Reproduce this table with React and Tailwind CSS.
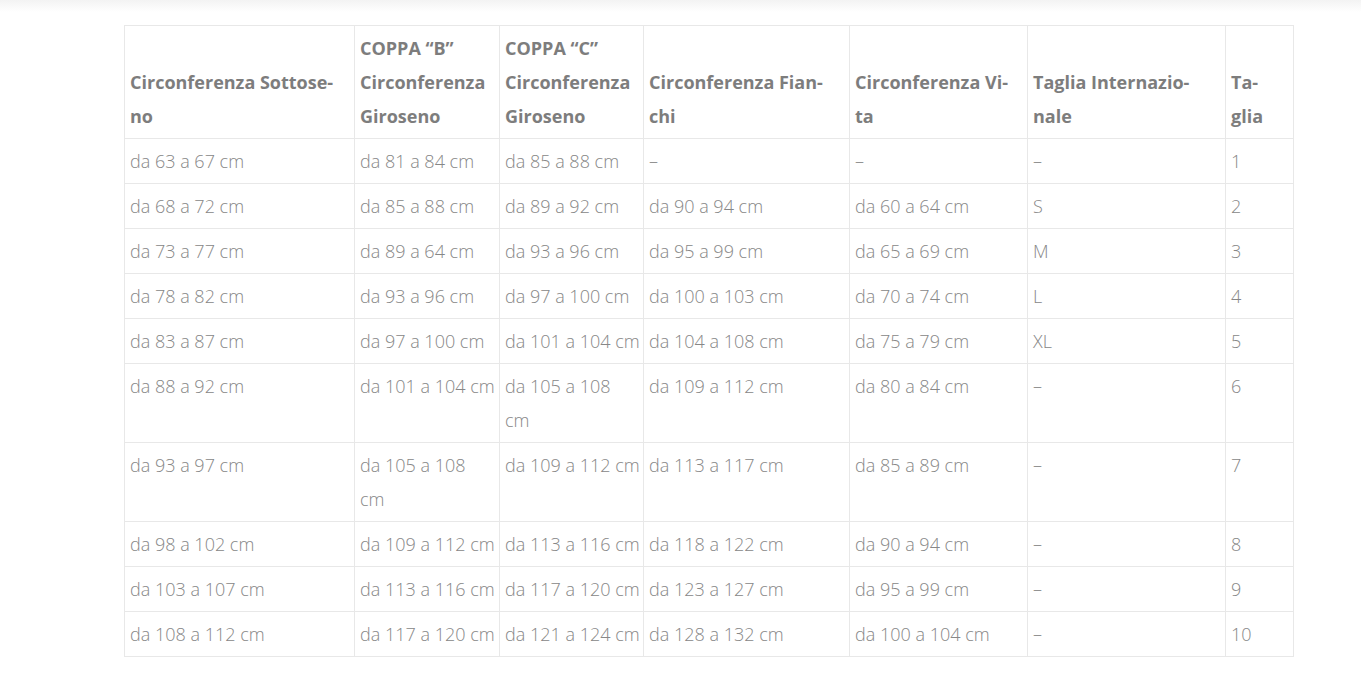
import React from 'react';

const headers = [
  ['Circonferenza Sottose-', 'no'],
  ['COPPA “B”', 'Circonferenza', 'Giroseno'],
  ['COPPA “C”', 'Circonferenza', 'Giroseno'],
  ['Circonferenza Fian-', 'chi'],
  ['Circonferenza Vi-', 'ta'],
  ['Taglia Internazio-', 'nale'],
  ['Ta-', 'glia'],
];

const colWidths = ['w-[230px]', 'w-[145px]', 'w-[144px]', 'w-[206px]', 'w-[178px]', 'w-[198px]', 'w-[68px]'];

// each cell: string or array of lines when it wraps
const rows = [
  ['da 63 a 67 cm', 'da 81 a 84 cm', 'da 85 a 88 cm', '–', '–', '–', '1'],
  ['da 68 a 72 cm', 'da 85 a 88 cm', 'da 89 a 92 cm', 'da 90 a 94 cm', 'da 60 a 64 cm', 'S', '2'],
  ['da 73 a 77 cm', 'da 89 a 64 cm', 'da 93 a 96 cm', 'da 95 a 99 cm', 'da 65 a 69 cm', 'M', '3'],
  ['da 78 a 82 cm', 'da 93 a 96 cm', 'da 97 a 100 cm', 'da 100 a 103 cm', 'da 70 a 74 cm', 'L', '4'],
  ['da 83 a 87 cm', 'da 97 a 100 cm', 'da 101 a 104 cm', 'da 104 a 108 cm', 'da 75 a 79 cm', 'XL', '5'],
  ['da 88 a 92 cm', 'da 101 a 104 cm', ['da 105 a 108', 'cm'], 'da 109 a 112 cm', 'da 80 a 84 cm', '–', '6'],
  ['da 93 a 97 cm', ['da 105 a 108', 'cm'], 'da 109 a 112 cm', 'da 113 a 117 cm', 'da 85 a 89 cm', '–', '7'],
  ['da 98 a 102 cm', 'da 109 a 112 cm', 'da 113 a 116 cm', 'da 118 a 122 cm', 'da 90 a 94 cm', '–', '8'],
  ['da 103 a 107 cm', 'da 113 a 116 cm', 'da 117 a 120 cm', 'da 123 a 127 cm', 'da 95 a 99 cm', '–', '9'],
  ['da 108 a 112 cm', 'da 117 a 120 cm', 'da 121 a 124 cm', 'da 128 a 132 cm', 'da 100 a 104 cm', '–', '10'],
];

const Lines = ({ value }) => {
  const lines = Array.isArray(value) ? value : [value];
  return lines.map((line, i) => (
    <React.Fragment key={i}>
      {i > 0 && <br />}
      {line}
    </React.Fragment>
  ));
};

export default function App() {
  return (
    <div className="min-h-[684px] bg-white font-['Open_Sans',sans-serif]">
      <div className="h-[12px] bg-gradient-to-b from-[#f3f3f3] to-white" />
      <div className="pt-[13px] pl-[124px]">
        <table className="w-[1169px] table-fixed border-collapse text-[18px] leading-[34px]">
          <colgroup>
            {colWidths.map((w, i) => (
              <col key={i} className={w} />
            ))}
          </colgroup>
          <thead>
            <tr>
              {headers.map((h, i) => (
                <th
                  key={i}
                  className="border border-[#e8e8e8] px-[5px] py-[5px] text-left align-bottom font-bold text-[#7d7d7d] whitespace-nowrap"
                >
                  <Lines value={h} />
                </th>
              ))}
            </tr>
          </thead>
          <tbody>
            {rows.map((row, r) => (
              <tr key={r}>
                {row.map((cell, c) => (
                  <td
                    key={c}
                    className="border border-[#e8e8e8] px-[5px] py-[5px] align-top font-light text-[#878787] whitespace-nowrap"
                  >
                    <Lines value={cell} />
                  </td>
                ))}
              </tr>
            ))}
          </tbody>
        </table>
      </div>
    </div>
  );
}
